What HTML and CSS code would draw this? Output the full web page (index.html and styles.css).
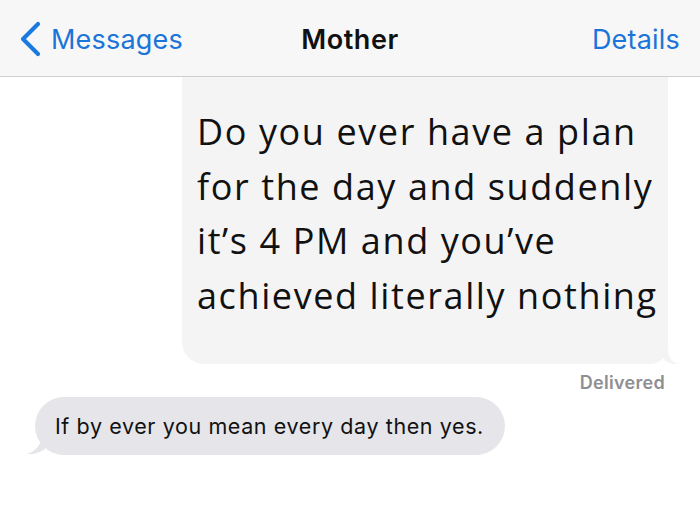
FILE: index.html
```html
<!DOCTYPE html>
<html>
<head>
<meta charset="utf-8">
<link rel="stylesheet" href="styles.css">
</head>
<body>
<header class="nav">
  <div class="nav-left">
    <svg class="chev" width="24" height="36" viewBox="0 0 24 36"><path d="M20 3 L5 18 L20 33" fill="none" stroke="#1b7ae0" stroke-width="4.2" stroke-linecap="round" stroke-linejoin="round"/></svg>
    <span class="link">Messages</span>
  </div>
  <div class="nav-title">Mother</div>
  <div class="nav-right"><span class="link">Details</span></div>
</header>
<main class="thread">
  <div class="row-out">
    <div class="bubble-img">
      <p class="img-text">Do you ever have a plan<br>for the day and suddenly<br>it’s 4 PM and you’ve<br>achieved literally nothing</p>
      <svg class="tail-r" width="16" height="16" viewBox="0 0 16 16"><path d="M0 0 L4 0 Q4 12 14 15 Q6 16 0 11 Z" fill="#f4f4f5"/></svg>
    </div>
  </div>
  <div class="status">Delivered</div>
  <div class="row-in">
    <div class="bubble-in">
      <svg class="tail-l" width="20" height="18" viewBox="0 0 20 18"><path d="M20 0 L16 0 Q16 12 2 17 Q12 18 20 12 Z" fill="#e5e5ea"/></svg>
      If by ever you mean every day then yes.
    </div>
  </div>
</main>
</body>
</html>
```
FILE: styles.css
```css
* { box-sizing: border-box; }
html, body { margin: 0; padding: 0; background: #fff; }
body { width: 700px; height: 508px; overflow: hidden; font-family: "Liberation Sans", Arial, sans-serif; }

.nav {
  height: 77px;
  background: #f7f7f8;
  border-bottom: 1px solid #cfcfd2;
  display: grid;
  grid-template-columns: 1fr auto 1fr;
  align-items: center;
  padding: 3px 20px 0 20px;
  font-family: Inter, "Liberation Sans", sans-serif;
  font-size: 27px;
  letter-spacing: 0.2px;
}
.nav-left { display: flex; align-items: center; gap: 9px; }
.chev { margin-left: -2px; margin-top: -2px; }
.link { color: #1b74d8; }
.nav-title { color: #111; font-weight: 600; letter-spacing: 0.6px; }
.nav-right { text-align: right; }

.thread { display: flex; flex-direction: column; }
.row-out { display: flex; justify-content: flex-end; padding-right: 32px; }
.bubble-img {
  position: relative;
  width: 486px;
  height: 287px;
  background: #f4f4f5;
  border-radius: 0 0 18px 22px;
  padding: 28px 0 0 15px;
}
.img-text {
  margin: 0;
  font-family: "Open Sans", sans-serif;
  font-size: 36px;
  line-height: 54.5px;
  letter-spacing: 1.6px;
  color: #111;
  white-space: nowrap;
}
.tail-r { position: absolute; right: -12px; bottom: -1px; }

.status {
  text-align: right;
  padding: 8px 35px 0 0;
  height: 33px;
  font-family: Inter, "Liberation Sans", sans-serif;
  font-size: 18px;
  font-weight: 600;
  letter-spacing: 0.3px;
  color: #8e8e93;
}
.row-in { display: flex; padding-left: 35px; }
.bubble-in {
  position: relative;
  height: 58px;
  width: 470px;
  background: #e5e5ea;
  border-radius: 29px;
  padding: 0 0 0 20px;
  display: flex;
  align-items: center;
  font-family: Inter, "Liberation Sans", sans-serif;
  font-size: 21.5px;
  letter-spacing: 0.6px;
  color: #111;
}
.tail-l { position: absolute; left: -10px; bottom: 0; }
```
